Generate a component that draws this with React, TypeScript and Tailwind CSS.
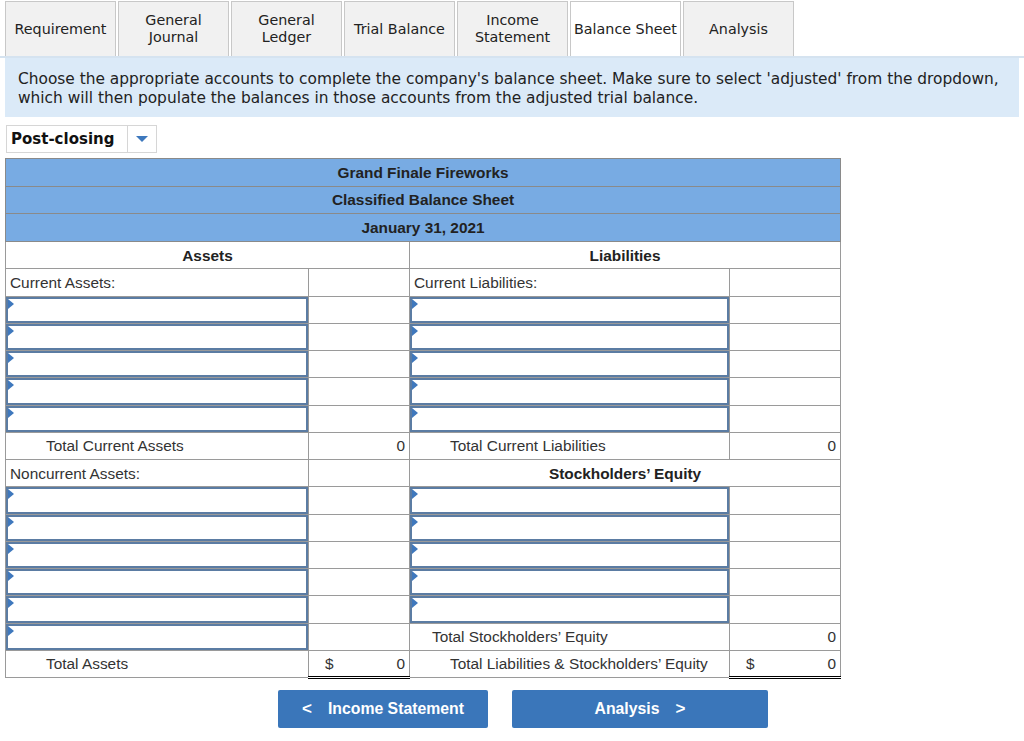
import React from 'react';

const tabs = [
  { label: ['Requirement'] },
  { label: ['General', 'Journal'] },
  { label: ['General', 'Ledger'] },
  { label: ['Trial Balance'] },
  { label: ['Income', 'Statement'] },
  { label: ['Balance Sheet'], active: true },
  { label: ['Analysis'] },
];

const cell = 'border border-[#9a9a9a] px-[4px] align-middle';

function InputCell() {
  return (
    <td className="border border-[#9a9a9a] p-0 align-top">
      <div className="relative h-[26.25px] border-2 border-[#5b7ca3] bg-white">
        <span className="absolute left-0 top-0 h-0 w-0 border-y-[5px] border-l-[6px] border-y-transparent border-l-[#3f78bd]" />
      </div>
    </td>
  );
}

function InputRow() {
  return (
    <tr className="h-[27.25px]">
      <InputCell />
      <td className={cell}></td>
      <InputCell />
      <td className={cell}></td>
    </tr>
  );
}

export default function App() {
  return (
    <div className="w-[1024px] h-[741px] bg-white text-[#222] font-['DejaVu_Sans',sans-serif]">
      {/* tabs */}
      <div className="flex gap-[2px] pl-[5px] pt-[1px] border-b-2 border-[#d5e3f0]">
        {tabs.map((t) => (
          <div
            key={t.label.join(' ')}
            className={`flex h-[55px] w-[111px] flex-col items-center justify-center border border-b-0 border-[#c8c8c8] text-[14.3px] leading-[17px] text-[#222] ${
              t.active ? 'bg-white border-[#a8a8a8]' : 'bg-[#f1f1f1]'
            }`}
          >
            {t.label.map((l) => (
              <span key={l}>{l}</span>
            ))}
          </div>
        ))}
      </div>

      {/* instructions */}
      <div className="mx-[5px] bg-[#dbeaf8] px-[13px] pt-[12px] pb-[9px] text-[15.4px] leading-[19px] text-[#222]">
        Choose the appropriate accounts to complete the company's balance sheet. Make sure to select 'adjusted' from the dropdown,
        which will then populate the balances in those accounts from the adjusted trial balance.
      </div>

      {/* dropdown */}
      <div className="mt-[8px] ml-[6px] flex h-[28px] w-[151px] items-center border border-[#d6d6d6] bg-white">
        <span className="flex-1 pl-[4px] text-[15px] font-bold text-[#111]">Post-closing</span>
        <span className="flex h-full w-[29px] items-center justify-center border-l border-[#d6d6d6]">
          <span className="h-0 w-0 border-x-[6px] border-t-[6px] border-x-transparent border-t-[#3d78bd]" />
        </span>
      </div>

      {/* balance sheet */}
      <table className="mt-[5px] ml-[5px] w-[835px] table-fixed border-collapse font-['Liberation_Sans',Arial,sans-serif] text-[15.4px] text-[#333]">
        <colgroup>
          <col className="w-[303px]" />
          <col className="w-[101px]" />
          <col className="w-[320px]" />
          <col className="w-[111px]" />
        </colgroup>
        <tbody>
          {['Grand Finale Fireworks', 'Classified Balance Sheet', 'January 31, 2021'].map((h) => (
            <tr key={h} className="h-[27.7px] bg-[#78abe3]">
              <td colSpan={4} className="border border-[#8a8a8a] text-center font-bold text-[#222]">
                {h}
              </td>
            </tr>
          ))}
          <tr className="h-[27.25px]">
            <td colSpan={2} className={`${cell} text-center font-bold text-[#222]`}>Assets</td>
            <td colSpan={2} className={`${cell} text-center font-bold text-[#222]`}>Liabilities</td>
          </tr>
          <tr className="h-[27.25px]">
            <td className={cell}>Current Assets:</td>
            <td className={cell}></td>
            <td className={cell}>Current Liabilities:</td>
            <td className={cell}></td>
          </tr>
          <InputRow />
          <InputRow />
          <InputRow />
          <InputRow />
          <InputRow />
          <tr className="h-[27.25px]">
            <td className={`${cell} pl-[40px]`}>Total Current Assets</td>
            <td className={`${cell} text-right`}>0</td>
            <td className={`${cell} pl-[40px]`}>Total Current Liabilities</td>
            <td className={`${cell} text-right`}>0</td>
          </tr>
          <tr className="h-[27.25px]">
            <td className={cell}>Noncurrent Assets:</td>
            <td className={cell}></td>
            <td colSpan={2} className={`${cell} text-center font-bold text-[#222]`}>Stockholders’ Equity</td>
          </tr>
          <InputRow />
          <InputRow />
          <InputRow />
          <InputRow />
          <InputRow />
          <tr className="h-[27.25px]">
            <InputCell />
            <td className={cell}></td>
            <td className={`${cell} pl-[22px]`}>Total Stockholders’ Equity</td>
            <td className={`${cell} text-right`}>0</td>
          </tr>
          <tr className="h-[27.25px]">
            <td className={`${cell} pl-[40px]`}>Total Assets</td>
            <td className={`${cell} border-b-[3px] border-b-black border-double`}>
              <div className="flex justify-between pl-[12px]">
                <span>$</span>
                <span>0</span>
              </div>
            </td>
            <td className={`${cell} pl-[40px]`}>Total Liabilities &amp; Stockholders’ Equity</td>
            <td className={`${cell} border-b-[3px] border-b-black border-double`}>
              <div className="flex justify-between pl-[12px]">
                <span>$</span>
                <span>0</span>
              </div>
            </td>
          </tr>
        </tbody>
      </table>

      {/* navigation */}
      <div className="mt-[11px] flex gap-[24px] pl-[278px] font-['Liberation_Sans',Arial,sans-serif] text-[15.8px] font-bold text-white">
        <button className="flex h-[38px] w-[210px] items-center justify-center gap-[16px] rounded-[2px] bg-[#3a76ba]">
          <span className="text-[17px]">&lt;</span>
          <span>Income Statement</span>
        </button>
        <button className="flex h-[38px] w-[256px] items-center justify-center gap-[16px] rounded-[2px] bg-[#3a76ba]">
          <span>Analysis</span>
          <span className="text-[17px]">&gt;</span>
        </button>
      </div>
    </div>
  );
}
